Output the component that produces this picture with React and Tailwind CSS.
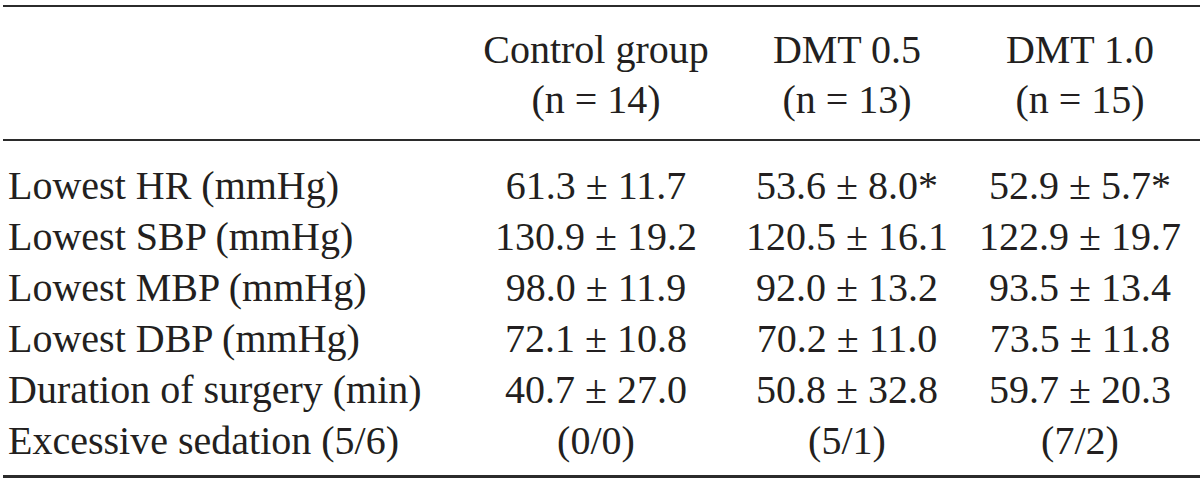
import React from "react";

const rows = [
  ["Lowest HR (mmHg)", "61.3 ± 11.7", "53.6 ± 8.0*", "52.9 ± 5.7*"],
  ["Lowest SBP (mmHg)", "130.9 ± 19.2", "120.5 ± 16.1", "122.9 ± 19.7"],
  ["Lowest MBP (mmHg)", "98.0 ± 11.9", "92.0 ± 13.2", "93.5 ± 13.4"],
  ["Lowest DBP (mmHg)", "72.1 ± 10.8", "70.2 ± 11.0", "73.5 ± 11.8"],
  ["Duration of surgery (min)", "40.7 ± 27.0", "50.8 ± 32.8", "59.7 ± 20.3"],
  ["Excessive sedation (5/6)", "(0/0)", "(5/1)", "(7/2)"],
];

const grid = "grid grid-cols-[470px_252px_250px_216px_12px]";

export default function App() {
  return (
    <div className="w-[1200px] h-[485px] bg-white pt-[5px] text-[#231f20] [font-family:'Liberation_Serif',serif] text-[40px]">
      <div className="ml-[3px] border-t-[2px] border-b-[2px] border-[#2b2b2b] pt-[18px] pb-[14px]">
        <div className={`${grid} -ml-[3px] leading-[50px]`}>
          <div />
          <div className="text-center">Control group<br />(n = 14)</div>
          <div className="text-center">DMT 0.5<br />(n = 13)</div>
          <div className="text-center">DMT 1.0<br />(n = 15)</div>
          <div />
        </div>
      </div>
      <div className="ml-[3px] border-b-[3px] border-[#2b2b2b] pt-[19px] pb-[9px]">
        {rows.map((r) => (
          <div key={r[0]} className={`${grid} -ml-[3px] leading-[51px]`}>
            <div className="pl-[8px] whitespace-nowrap">{r[0]}</div>
            <div className="text-center whitespace-nowrap">{r[1]}</div>
            <div className="text-center whitespace-nowrap">{r[2]}</div>
            <div className="text-center whitespace-nowrap">{r[3]}</div>
            <div />
          </div>
        ))}
      </div>
    </div>
  );
}
